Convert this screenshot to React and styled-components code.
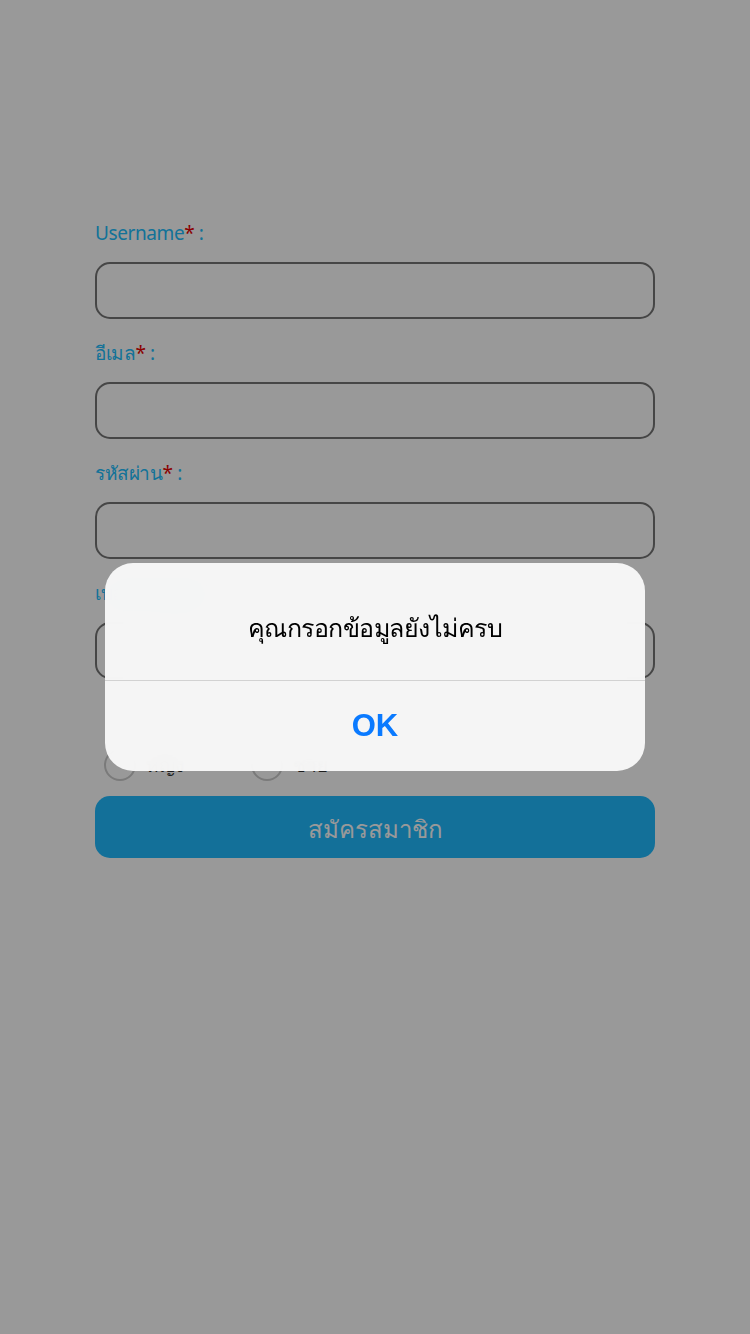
import React from 'react'
import styled, { createGlobalStyle } from 'styled-components'

const GlobalStyle = createGlobalStyle`
  html, body {
    margin: 0;
    padding: 0;
    background: #ffffff;
    font-family: "Noto Sans", "Liberation Sans", sans-serif;
  }
`;

const Page = styled.div`
  position: relative;
  width: 750px;
  min-height: 1334px;
  background: #ffffff;
`;

const Form = styled.form`
  width: 560px;
  margin: 0 auto;
  padding-top: 216px;
  display: flex;
  flex-direction: column;
`;

const Label = styled.label`
  display: block;
  height: 30px;
  line-height: 34px;
  margin: ${props => props.first ? '0' : '17px'} 0 16px 0;
  color: #20befe;
  font-size: 19px;
  letter-spacing: -0.4px;
`;

const Star = styled.span`
  color: #e80000;
`;

const Input = styled.input`
  box-sizing: border-box;
  width: 100%;
  height: 57px;
  border: 2px solid #757575;
  border-radius: 15px;
  background: transparent;
  font-size: 20px;
  padding: 0 16px;
  outline: none;
`;

const RadioRow = styled.div`
  display: flex;
  align-items: center;
  height: 32px;
  margin: 70px 0 15px 9px;
`;

const RadioItem = styled.label`
  display: flex;
  align-items: center;
  gap: 10px;
  width: 147px;
  font-size: 19px;
  color: #333;
`;

const RadioCircle = styled.span`
  box-sizing: border-box;
  width: 32px;
  height: 32px;
  border-radius: 50%;
  border: 2px solid #cccccc;
  background: #ffffff;
`;

const Submit = styled.button`
  width: 100%;
  height: 62px;
  padding-top: 6px;
  border: none;
  border-radius: 15px;
  background: #20bbff;
  color: #ffffff;
  font-family: inherit;
  font-size: 24px;
`;

const Overlay = styled.div`
  position: fixed;
  inset: 0;
  background: rgba(0, 0, 0, 0.4);
  display: flex;
  align-items: center;
  justify-content: center;
`;

const Dialog = styled.div`
  width: 540px;
  height: 208px;
  border-radius: 28px;
  background: rgba(248, 248, 248, 0.97);
  backdrop-filter: blur(12px);
  display: flex;
  flex-direction: column;
  overflow: hidden;
`;

const Message = styled.div`
  box-sizing: border-box;
  height: 118px;
  padding-top: 12px;
  display: flex;
  align-items: center;
  justify-content: center;
  font-size: 25px;
  letter-spacing: -0.5px;
  color: #000;
  border-bottom: 1px solid #d2d2d2;
`;

const OkButton = styled.button`
  flex: 1;
  border: none;
  background: transparent;
  color: #0a7aff;
  font-family: "Liberation Sans", sans-serif;
  font-size: 31px;
  font-weight: 600;
`;

const fields = [
  { label: 'Username' },
  { label: 'อีเมล' },
  { label: 'รหัสผ่าน' },
  { label: 'เบอร์โทรศัพท์' },
]

function App() {
  return (
    <>
      <GlobalStyle />
      <Page>
        <Form onSubmit={e => e.preventDefault()}>
          {fields.map((f, i) => (
            <React.Fragment key={f.label}>
              <Label first={i === 0}>{f.label}<Star>*</Star> :</Label>
              <Input />
            </React.Fragment>
          ))}
          <RadioRow>
            <RadioItem><RadioCircle />หญิง</RadioItem>
            <RadioItem><RadioCircle />ชาย</RadioItem>
          </RadioRow>
          <Submit type="submit">สมัครสมาชิก</Submit>
        </Form>
        <Overlay>
          <Dialog>
            <Message>คุณกรอกข้อมูลยังไม่ครบ</Message>
            <OkButton>OK</OkButton>
          </Dialog>
        </Overlay>
      </Page>
    </>
  )
}

export default App
